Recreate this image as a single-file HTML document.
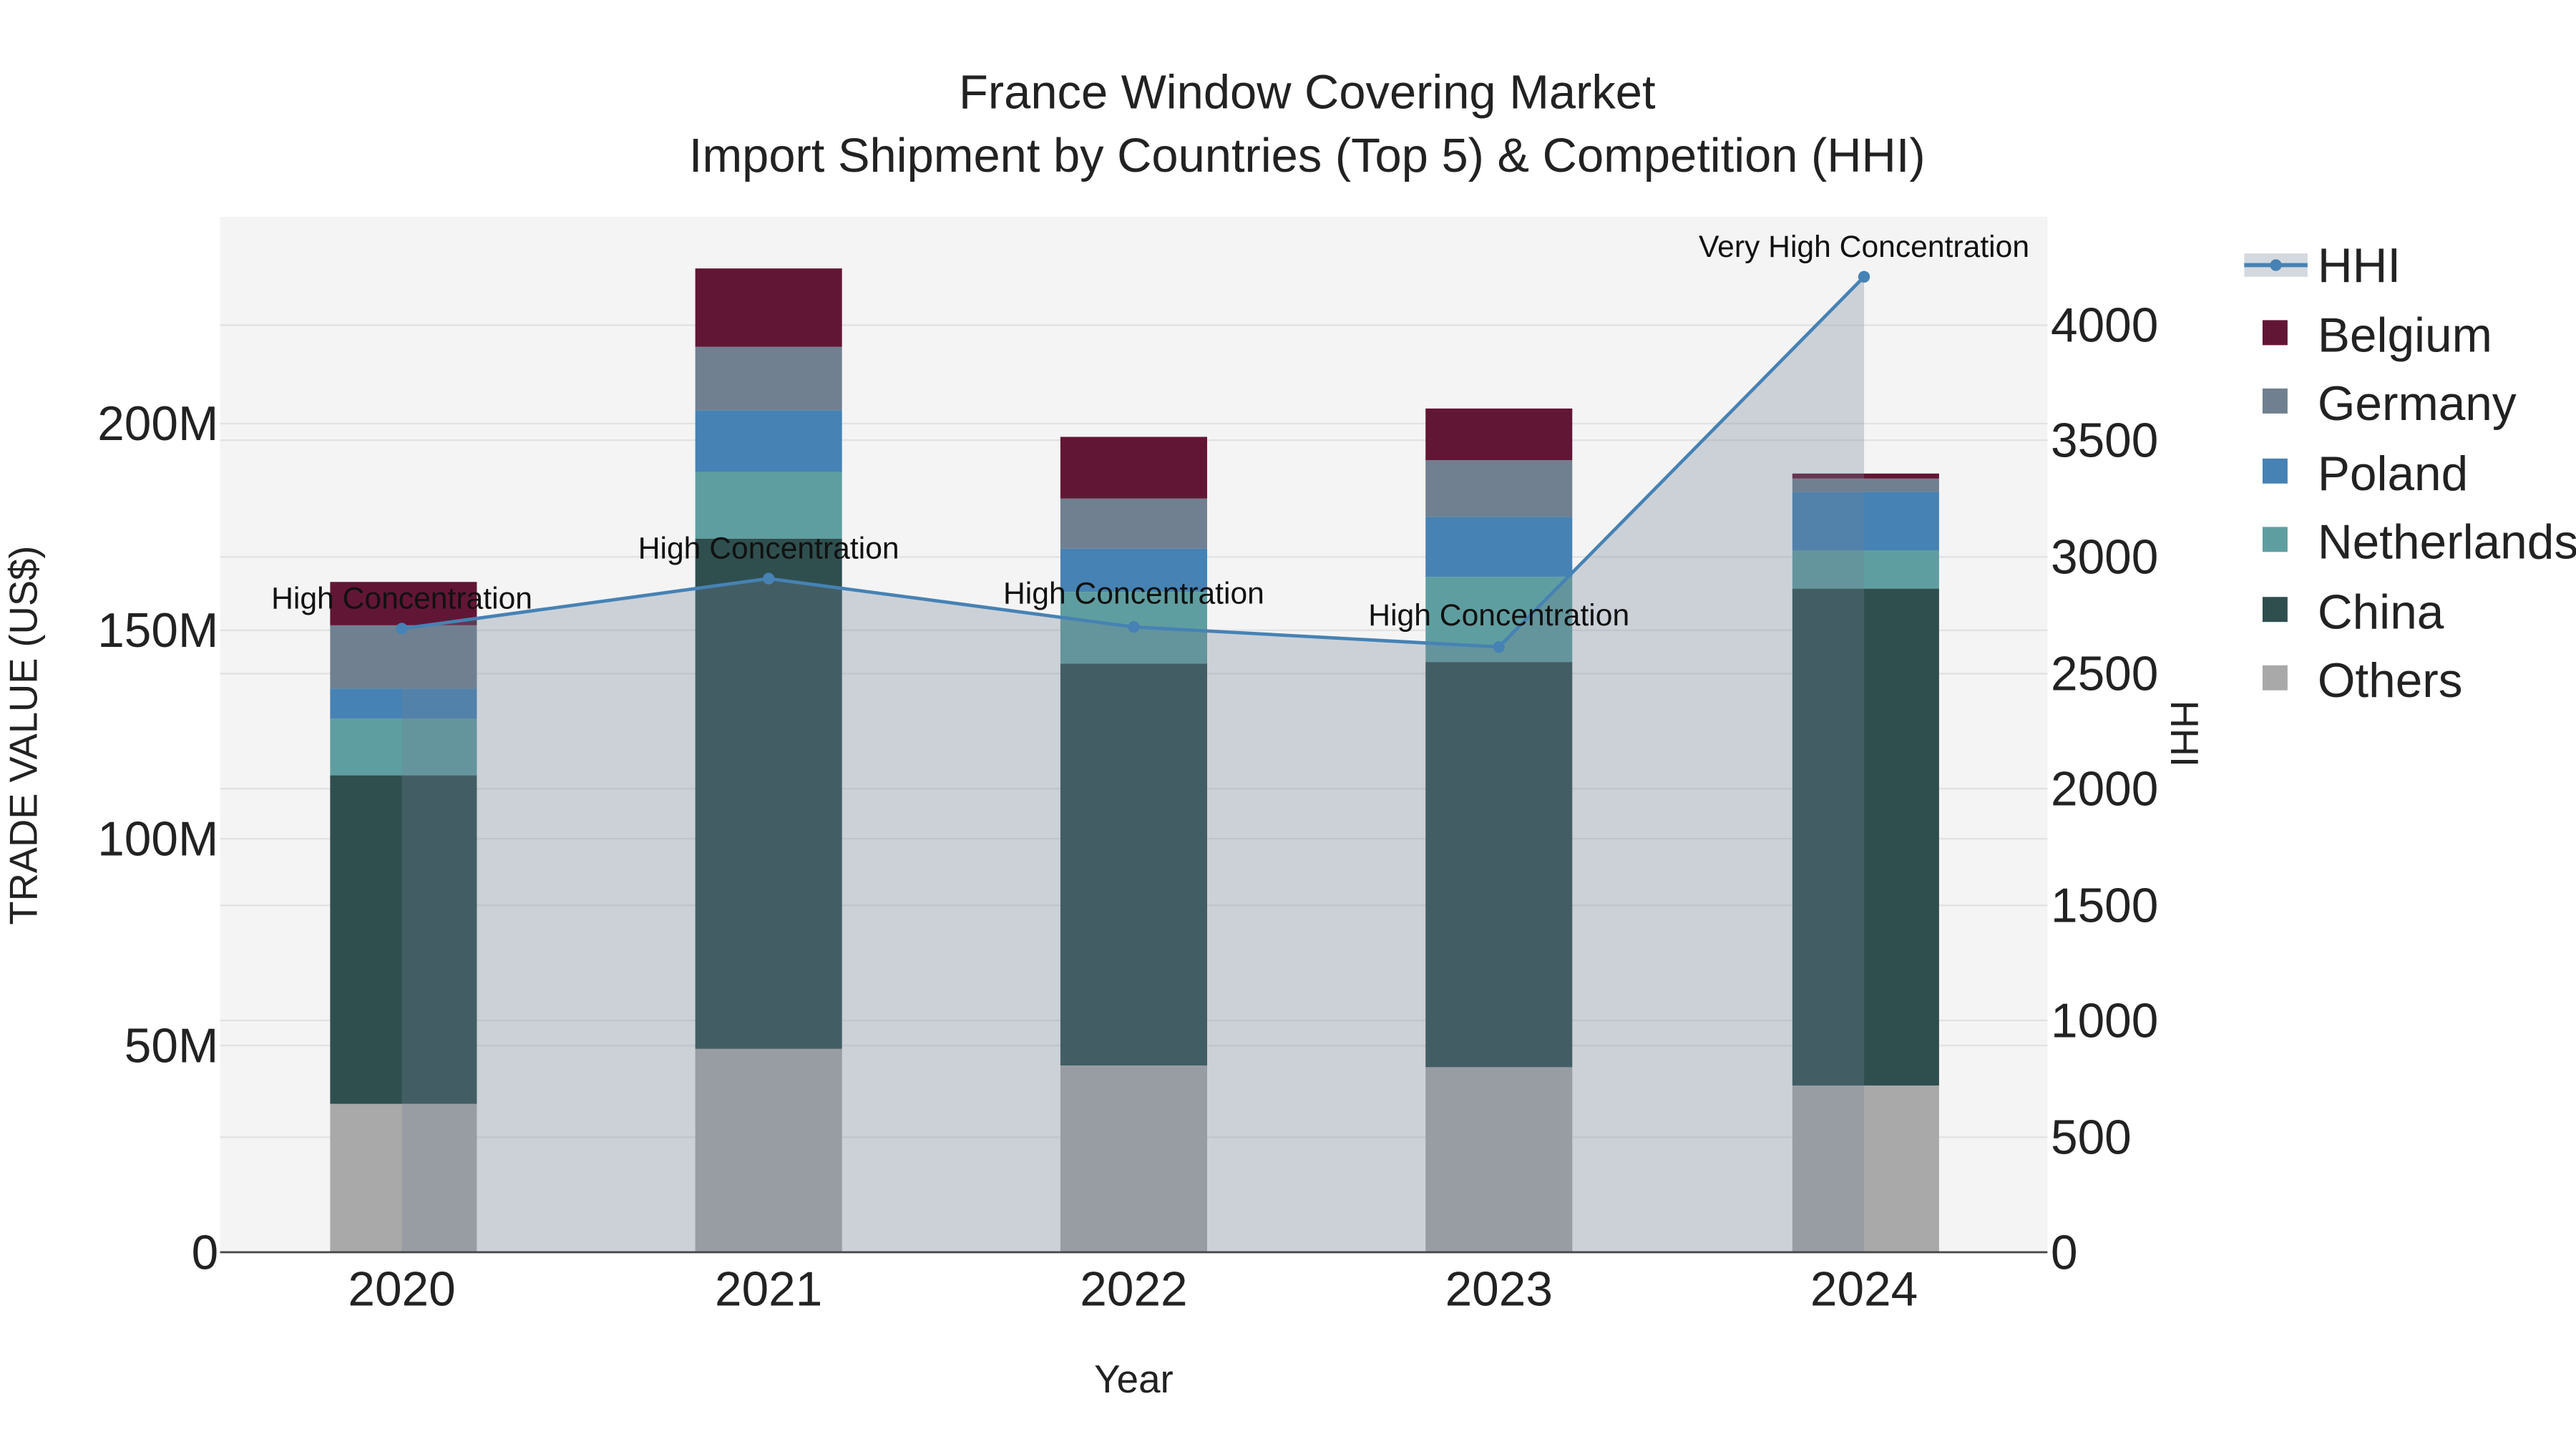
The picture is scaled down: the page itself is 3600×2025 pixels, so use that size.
<!DOCTYPE html>
<html><head><meta charset="utf-8"><style>
html,body{margin:0;padding:0;background:#fff;}
svg{display:block;}
text{font-family:"Liberation Sans",sans-serif;}
</style></head><body>
<svg width="3600" height="2025" viewBox="0 0 1545 869" preserveAspectRatio="none" xmlns="http://www.w3.org/2000/svg">
<rect width="1545" height="869" fill="#fff"/>
<rect x="132" y="130" width="1096" height="621" fill="#f4f4f4"/>
<g stroke="#e2e2e2" stroke-width="1">
<line x1="132" x2="1228" y1="627" y2="627"/><line x1="132" x2="1228" y1="503" y2="503"/>
<line x1="132" x2="1228" y1="378" y2="378"/><line x1="132" x2="1228" y1="254" y2="254"/>
<line x1="132" x2="1228" y1="682" y2="682"/><line x1="132" x2="1228" y1="612" y2="612"/>
<line x1="132" x2="1228" y1="543" y2="543"/><line x1="132" x2="1228" y1="473" y2="473"/>
<line x1="132" x2="1228" y1="404" y2="404"/><line x1="132" x2="1228" y1="334" y2="334"/>
<line x1="132" x2="1228" y1="264" y2="264"/><line x1="132" x2="1228" y1="195" y2="195"/>
</g>
<g>
<rect x="198" y="662" width="88" height="89" fill="#a9a9a9"/>
<rect x="198" y="465" width="88" height="197" fill="#2f4f4f"/>
<rect x="198" y="431" width="88" height="34" fill="#5f9ea0"/>
<rect x="198" y="413" width="88" height="18" fill="#4682b4"/>
<rect x="198" y="375" width="88" height="38" fill="#708090"/>
<rect x="198" y="349" width="88" height="26" fill="#621635"/>

<rect x="417" y="629" width="88" height="122" fill="#a9a9a9"/>
<rect x="417" y="323" width="88" height="306" fill="#2f4f4f"/>
<rect x="417" y="283" width="88" height="40" fill="#5f9ea0"/>
<rect x="417" y="246" width="88" height="37" fill="#4682b4"/>
<rect x="417" y="208" width="88" height="38" fill="#708090"/>
<rect x="417" y="161" width="88" height="47" fill="#621635"/>

<rect x="636" y="639" width="88" height="112" fill="#a9a9a9"/>
<rect x="636" y="398" width="88" height="241" fill="#2f4f4f"/>
<rect x="636" y="355" width="88" height="43" fill="#5f9ea0"/>
<rect x="636" y="329" width="88" height="26" fill="#4682b4"/>
<rect x="636" y="299" width="88" height="30" fill="#708090"/>
<rect x="636" y="262" width="88" height="37" fill="#621635"/>

<rect x="855" y="640" width="88" height="111" fill="#a9a9a9"/>
<rect x="855" y="397" width="88" height="243" fill="#2f4f4f"/>
<rect x="855" y="346" width="88" height="51" fill="#5f9ea0"/>
<rect x="855" y="310" width="88" height="36" fill="#4682b4"/>
<rect x="855" y="276" width="88" height="34" fill="#708090"/>
<rect x="855" y="245" width="88" height="31" fill="#621635"/>

<rect x="1075" y="651" width="88" height="100" fill="#a9a9a9"/>
<rect x="1075" y="353" width="88" height="298" fill="#2f4f4f"/>
<rect x="1075" y="330" width="88" height="23" fill="#5f9ea0"/>
<rect x="1075" y="295" width="88" height="35" fill="#4682b4"/>
<rect x="1075" y="287" width="88" height="8" fill="#708090"/>
<rect x="1075" y="284" width="88" height="3" fill="#621635"/>
</g>
<polygon points="241,377 461,347 680,376 899,388 1118,166 1118,751 241,751" fill="rgba(112,128,150,0.3)"/>
<polyline points="241,377 461,347 680,376 899,388 1118,166" fill="none" stroke="#4682b4" stroke-width="2"/>
<g fill="#4682b4"><circle cx="241" cy="377" r="3.5"/><circle cx="461" cy="347" r="3.5"/><circle cx="680" cy="376" r="3.5"/><circle cx="899" cy="388" r="3.5"/><circle cx="1118" cy="166" r="3.5"/></g>
<line x1="132" x2="1228" y1="751" y2="751" stroke="#444" stroke-width="1.2"/>
<g font-size="18.3" fill="#111" text-anchor="middle">
<text x="241" y="365">High Concentration</text>
<text x="461" y="335">High Concentration</text>
<text x="680" y="362">High Concentration</text>
<text x="899" y="375">High Concentration</text>
<text x="1118" y="154">Very High Concentration</text>
</g>
<g fill="#222" text-anchor="middle" font-size="28.7">
<text x="784" y="65">France Window Covering Market</text>
<text x="784" y="103">Import Shipment by Countries (Top 5) &amp; Competition (HHI)</text>
</g>
<g fill="#222" font-size="29" text-anchor="end">
<text x="131" y="761">0</text><text x="131" y="637">50M</text><text x="131" y="513">100M</text>
<text x="131" y="388">150M</text><text x="131" y="264">200M</text>
</g>
<g fill="#222" font-size="29" text-anchor="start">
<text x="1230" y="761">0</text><text x="1230" y="692">500</text><text x="1230" y="622">1000</text>
<text x="1230" y="553">1500</text><text x="1230" y="483">2000</text><text x="1230" y="414">2500</text>
<text x="1230" y="344">3000</text><text x="1230" y="274">3500</text><text x="1230" y="205">4000</text>
</g>
<g fill="#222" font-size="29" text-anchor="middle">
<text x="241" y="783">2020</text><text x="461" y="783">2021</text><text x="680" y="783">2022</text>
<text x="899" y="783">2023</text><text x="1118" y="783">2024</text>
</g>
<text x="680" y="835" font-size="23.5" fill="#222" text-anchor="middle">Year</text>
<text transform="translate(22,441) rotate(-90)" font-size="23.3" fill="#222" text-anchor="middle">TRADE VALUE (US$)</text>
<text transform="translate(1302,440) rotate(90)" font-size="23.3" fill="#222" text-anchor="middle">HHI</text>
<rect x="1346" y="152" width="38" height="14" fill="rgba(112,128,150,0.3)"/>
<line x1="1346" x2="1384" y1="159" y2="159" stroke="#4682b4" stroke-width="2.5"/>
<circle cx="1365" cy="159" r="3.5" fill="#4682b4"/>
<g>
<rect x="1357" y="192" width="15" height="15" fill="#621635"/>
<rect x="1357" y="233" width="15" height="15" fill="#708090"/>
<rect x="1357" y="275" width="15" height="15" fill="#4682b4"/>
<rect x="1357" y="316" width="15" height="15" fill="#5f9ea0"/>
<rect x="1357" y="358" width="15" height="15" fill="#2f4f4f"/>
<rect x="1357" y="399" width="15" height="15" fill="#a9a9a9"/>
</g>
<g fill="#222" font-size="29">
<text x="1390" y="169">HHI</text><text x="1390" y="211">Belgium</text><text x="1390" y="252">Germany</text>
<text x="1390" y="294">Poland</text><text x="1390" y="335">Netherlands</text><text x="1390" y="377">China</text>
<text x="1390" y="418">Others</text>
</g>
</svg>
</body></html>
